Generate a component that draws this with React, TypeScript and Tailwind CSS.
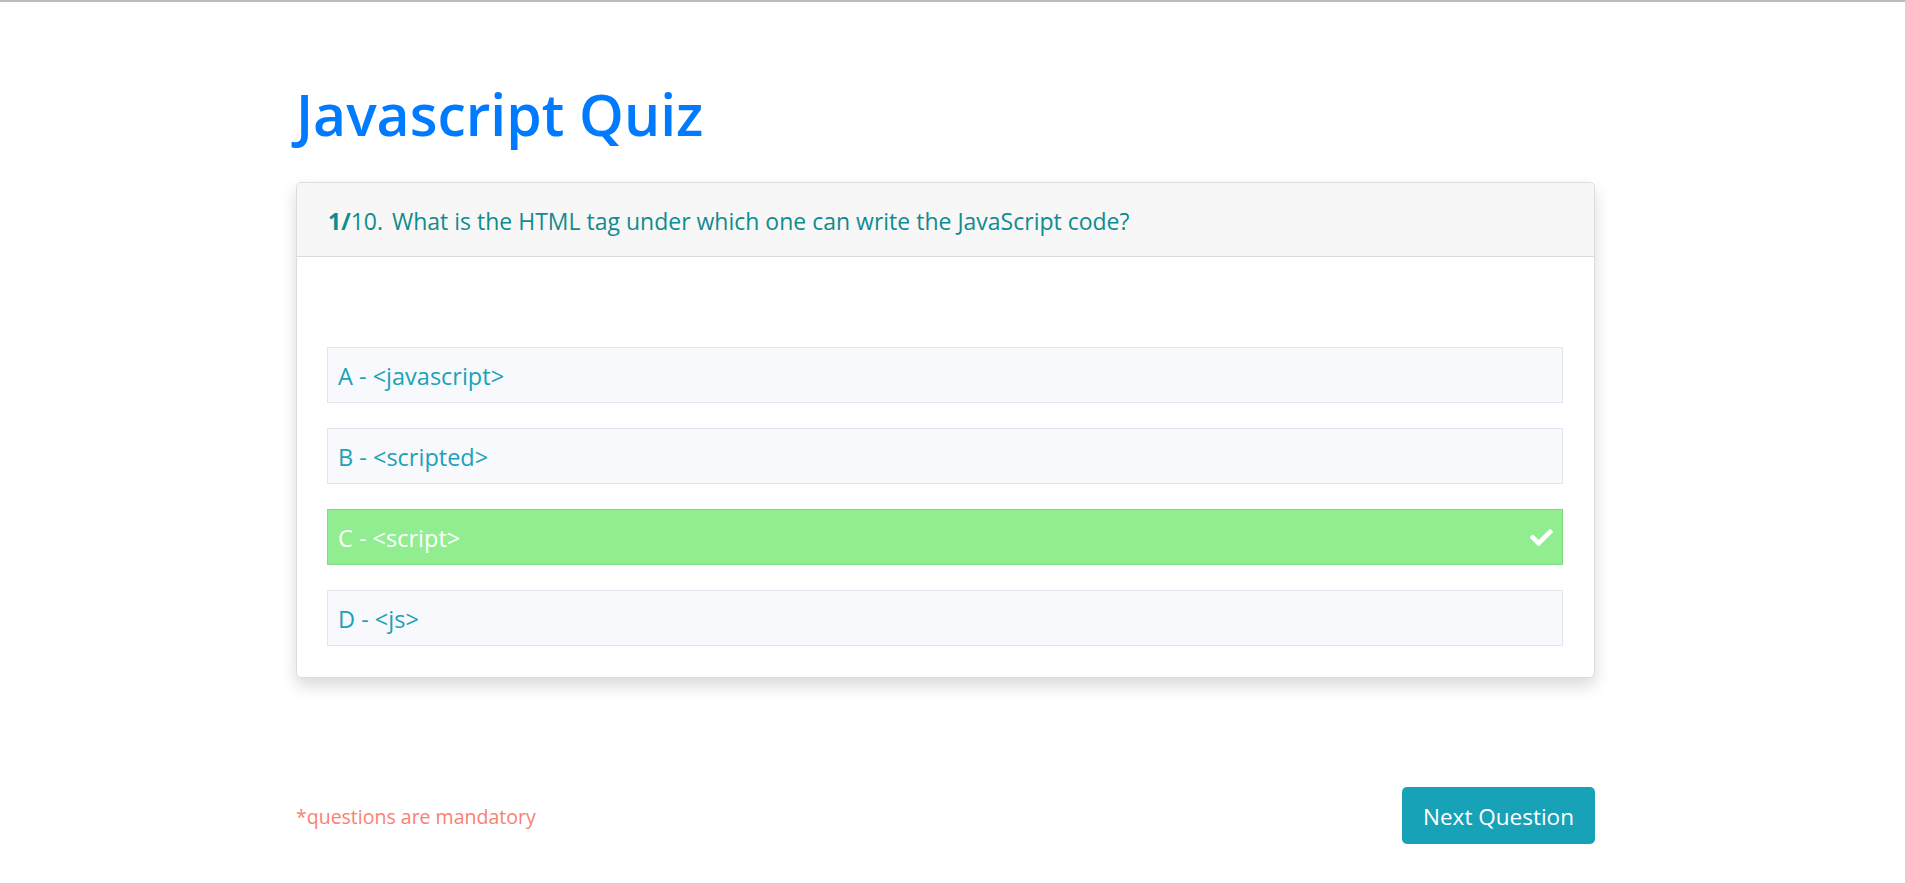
import React from 'react';
import { FaCheck } from 'react-icons/fa';

const options = [
  { key: 'A', text: '<javascript>' },
  { key: 'B', text: '<scripted>' },
  { key: 'C', text: '<script>' },
  { key: 'D', text: '<js>' },
];

const correct = 'C';

const App = () => {
  return (
    <div className="min-h-screen bg-white border-t-2 border-[#bdbdbd] font-['Open_Sans',sans-serif]">
      <div className="ml-[296px] w-[1299px] pt-[78px]">
        <h1 className="text-[57px] leading-[1.2] font-semibold text-[#007bff]">Javascript Quiz</h1>

        {/* question card */}
        <div className="mt-[34px] rounded-[5px] border border-[#dcdcdc] bg-white shadow-[0_8px_16px_rgba(0,0,0,0.15)]">
          <div className="rounded-t-[5px] border-b border-[#dcdcdc] bg-[#f7f7f7] pl-[31px] pt-[21px] pb-[18px] text-[23px] leading-[34px] text-[#108b8f]">
            <span className="font-bold">1/</span>
            <span>10.</span>
            <span className="ml-[9px]">What is the HTML tag under which one can write the JavaScript code?</span>
          </div>

          <div className="flex flex-col gap-[25px] pl-[30px] pr-[31px] pt-[90px] pb-[31px]">
            {options.map((o) =>
              o.key === correct ? (
                <div
                  key={o.key}
                  className="flex h-[56px] items-center justify-between border border-[#80dc80] bg-[#90ee90] pl-[10px] pr-[9px] pt-[3px] text-[23.5px] text-white"
                >
                  <span>{o.key} - {o.text}</span>
                  <FaCheck size={23} className="-mt-[3px]" />
                </div>
              ) : (
                <div
                  key={o.key}
                  className="flex h-[56px] items-center border border-[#e3e4ee] bg-[#f8f9fd] px-[10px] pt-[3px] text-[23.5px] text-[#1aa2b7]"
                >
                  <span>{o.key} - {o.text}</span>
                </div>
              )
            )}
          </div>
        </div>

        {/* footer */}
        <div className="mt-[109px] flex items-center justify-between">
          <span className="pt-[2px] text-[19.5px] text-[#fa8072]">*questions are mandatory</span>
          <button className="h-[57px] w-[193px] rounded-[5px] bg-[#17a2b8] pt-[2px] text-[22.5px] text-white">
            Next Question
          </button>
        </div>
      </div>
    </div>
  );
};

export default App;
